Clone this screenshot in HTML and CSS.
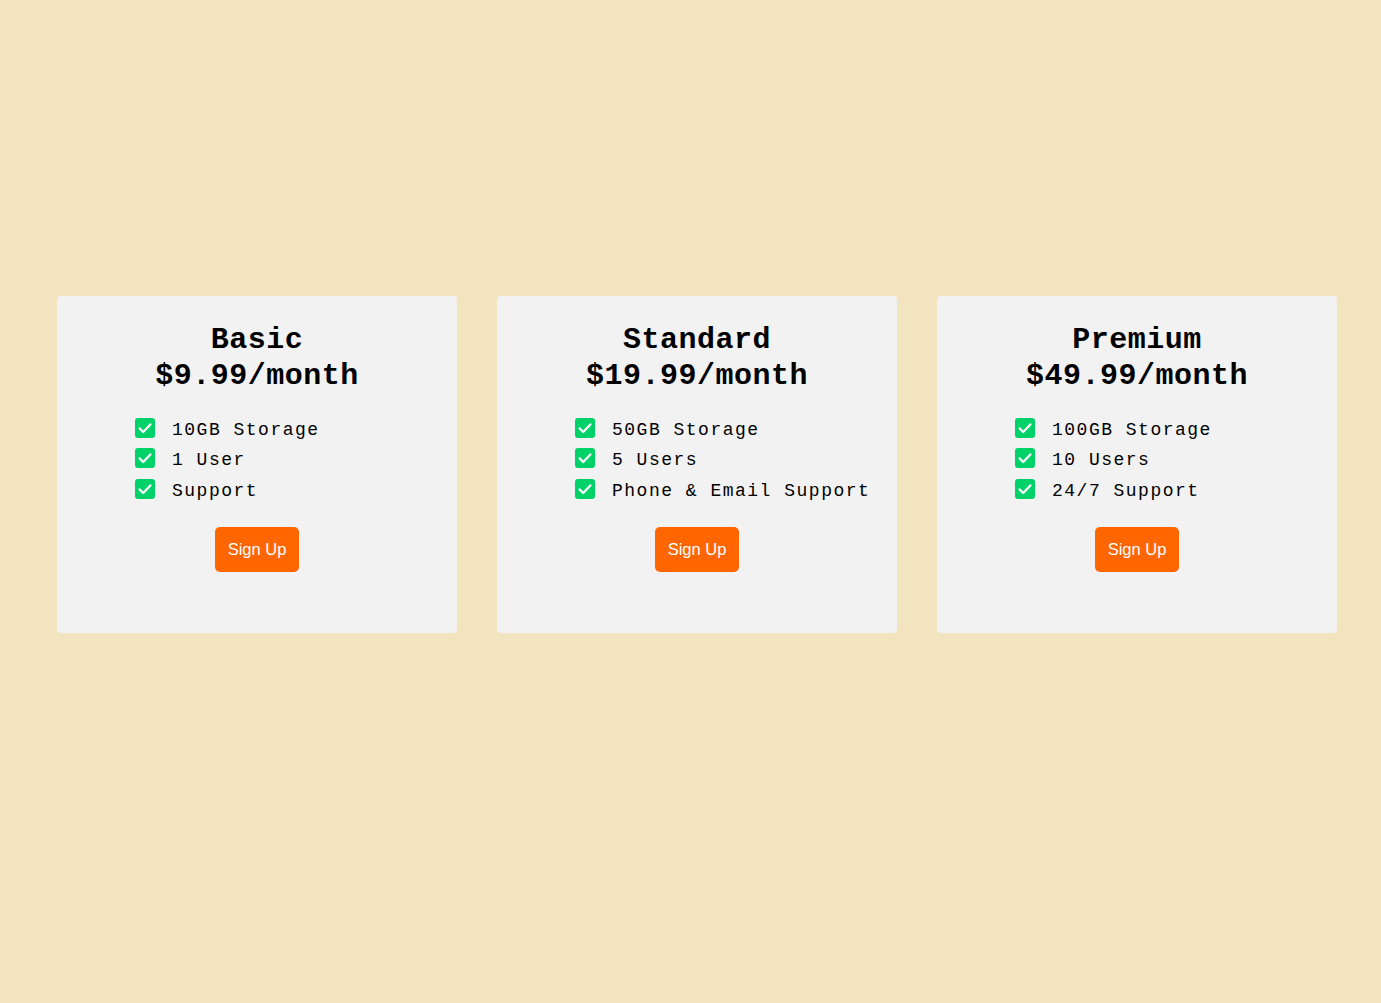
FILE: index.html
```html
<!DOCTYPE html>
<html lang="en">
<head>
<meta charset="utf-8">
<title>Pricing</title>
<link rel="stylesheet" href="styles.css">
</head>
<body>
<main class="pricing">
  <section class="card">
    <h2 class="card-title">Basic<br>$9.99/month</h2>
    <ul class="features">
      <li><span class="check"><svg viewBox="0 0 20 20" width="20" height="20"><rect width="20" height="20" rx="3" fill="#00d26a"/><path d="M4.6 10.4l3.6 3.6L15.4 6.4" fill="none" stroke="#fff" stroke-width="2.2" stroke-linecap="round" stroke-linejoin="round"/></svg></span>10GB Storage</li>
      <li><span class="check"><svg viewBox="0 0 20 20" width="20" height="20"><rect width="20" height="20" rx="3" fill="#00d26a"/><path d="M4.6 10.4l3.6 3.6L15.4 6.4" fill="none" stroke="#fff" stroke-width="2.2" stroke-linecap="round" stroke-linejoin="round"/></svg></span>1 User</li>
      <li><span class="check"><svg viewBox="0 0 20 20" width="20" height="20"><rect width="20" height="20" rx="3" fill="#00d26a"/><path d="M4.6 10.4l3.6 3.6L15.4 6.4" fill="none" stroke="#fff" stroke-width="2.2" stroke-linecap="round" stroke-linejoin="round"/></svg></span>Support</li>
    </ul>
    <button class="signup">Sign Up</button>
  </section>
  <section class="card">
    <h2 class="card-title">Standard<br>$19.99/month</h2>
    <ul class="features">
      <li><span class="check"><svg viewBox="0 0 20 20" width="20" height="20"><rect width="20" height="20" rx="3" fill="#00d26a"/><path d="M4.6 10.4l3.6 3.6L15.4 6.4" fill="none" stroke="#fff" stroke-width="2.2" stroke-linecap="round" stroke-linejoin="round"/></svg></span>50GB Storage</li>
      <li><span class="check"><svg viewBox="0 0 20 20" width="20" height="20"><rect width="20" height="20" rx="3" fill="#00d26a"/><path d="M4.6 10.4l3.6 3.6L15.4 6.4" fill="none" stroke="#fff" stroke-width="2.2" stroke-linecap="round" stroke-linejoin="round"/></svg></span>5 Users</li>
      <li><span class="check"><svg viewBox="0 0 20 20" width="20" height="20"><rect width="20" height="20" rx="3" fill="#00d26a"/><path d="M4.6 10.4l3.6 3.6L15.4 6.4" fill="none" stroke="#fff" stroke-width="2.2" stroke-linecap="round" stroke-linejoin="round"/></svg></span>Phone &amp; Email Support</li>
    </ul>
    <button class="signup">Sign Up</button>
  </section>
  <section class="card">
    <h2 class="card-title">Premium<br>$49.99/month</h2>
    <ul class="features">
      <li><span class="check"><svg viewBox="0 0 20 20" width="20" height="20"><rect width="20" height="20" rx="3" fill="#00d26a"/><path d="M4.6 10.4l3.6 3.6L15.4 6.4" fill="none" stroke="#fff" stroke-width="2.2" stroke-linecap="round" stroke-linejoin="round"/></svg></span>100GB Storage</li>
      <li><span class="check"><svg viewBox="0 0 20 20" width="20" height="20"><rect width="20" height="20" rx="3" fill="#00d26a"/><path d="M4.6 10.4l3.6 3.6L15.4 6.4" fill="none" stroke="#fff" stroke-width="2.2" stroke-linecap="round" stroke-linejoin="round"/></svg></span>10 Users</li>
      <li><span class="check"><svg viewBox="0 0 20 20" width="20" height="20"><rect width="20" height="20" rx="3" fill="#00d26a"/><path d="M4.6 10.4l3.6 3.6L15.4 6.4" fill="none" stroke="#fff" stroke-width="2.2" stroke-linecap="round" stroke-linejoin="round"/></svg></span>24/7 Support</li>
    </ul>
    <button class="signup">Sign Up</button>
  </section>
</main>
</body>
</html>
```

FILE: styles.css
```css
html, body {
  margin: 0;
  padding: 0;
}

body {
  background: #f3e4c0;
  font-family: "Liberation Mono", "DejaVu Sans Mono", monospace;
  color: #000;
  min-height: 1003px;
}

.pricing {
  display: flex;
  gap: 40px;
  padding: 296px 0 0 57px;
}

.card {
  width: 400px;
  box-sizing: border-box;
  background: #f2f2f2;
  border-radius: 4px;
  padding: 26px 0 61px;
  display: flex;
  flex-direction: column;
}

.card-title {
  margin: 0;
  text-align: center;
  font-size: 30px;
  line-height: 36px;
  font-weight: 700;
  letter-spacing: 0.5px;
}

.features {
  list-style: none;
  margin: 21px 0 0;
  padding: 0 0 0 78px;
  font-size: 18px;
  letter-spacing: 1.5px;
}

.features li {
  display: flex;
  align-items: center;
  height: 30px;
  white-space: nowrap;
}

.features li:last-child {
  height: 32px;
}

.check {
  display: inline-flex;
  width: 20px;
  height: 20px;
  margin-right: 17px;
  margin-bottom: 4px;
}

.signup {
  align-self: center;
  margin-top: 20px;
  height: 45px;
  padding: 0 13px;
  border: 0;
  border-radius: 5px;
  background: #ff6600;
  color: #fff;
  font-family: "Liberation Sans", Arial, sans-serif;
  font-size: 16.5px;
  cursor: pointer;
}
```
